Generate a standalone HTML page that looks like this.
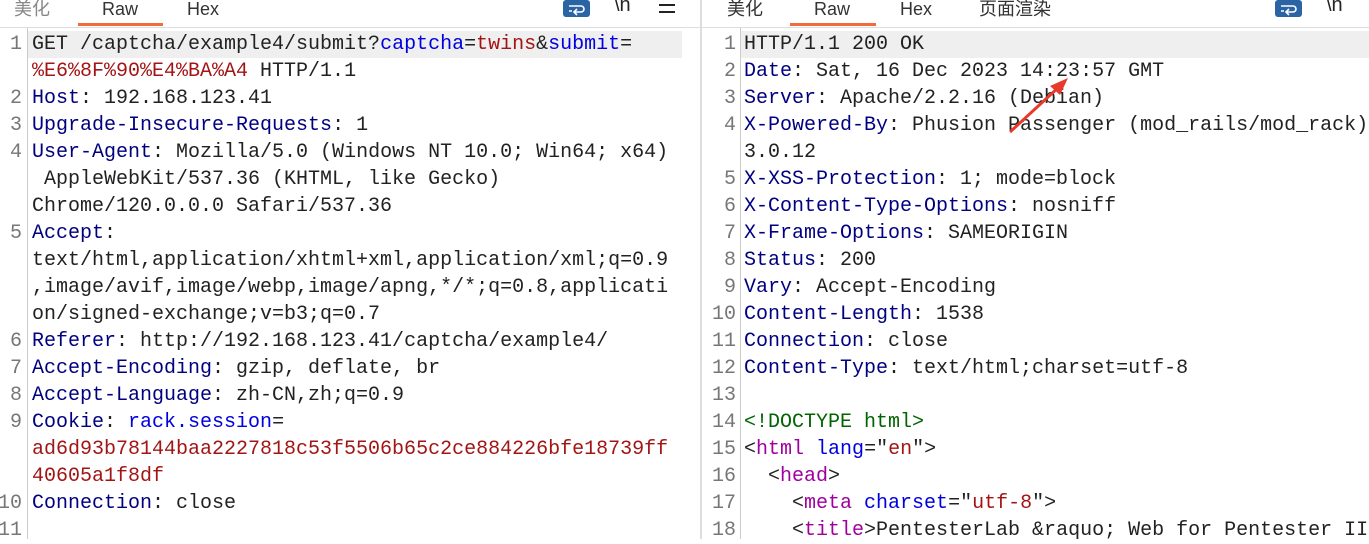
<!DOCTYPE html>
<html><head><meta charset="utf-8"><style>
*{margin:0;padding:0;box-sizing:border-box}
body{width:1369px;height:539px;overflow:hidden;background:#fff;position:relative;font-family:"Liberation Mono","Noto Sans CJK SC",monospace}
.tab{position:absolute;top:0;line-height:18px;font-family:"Liberation Sans","Noto Sans CJK SC",sans-serif;font-size:18px;color:#333}
.tab.g{color:#888}
.ul{position:absolute;top:23px;height:3px;background:#f26b3a}
.hr{position:absolute;top:27px;height:1px;background:#ddd}
.gut{position:absolute;top:28px;bottom:0;width:1px;background:#ccc}
.row{position:absolute;height:27px;line-height:27px;font-size:20px;white-space:pre;color:#222}
.ln{position:absolute;height:27px;line-height:27px;font-size:20px;color:#777;text-align:right}
.hl{position:absolute;top:31px;height:27px;background:#efefef}
.k{color:#000080}.b{color:#0000e0}.r{color:#a31515}.p{color:#a000a0}.gr{color:#006400}
.ic{position:absolute;top:0;width:27px;height:17px;background:#2a64a4;border-radius:3px}
.nl{position:absolute;top:-6px;font-family:"Liberation Sans",sans-serif;font-size:20px;color:#222}
</style></head><body>
<div class="tab g" style="left:14px">美化</div>
<div class="tab" style="left:102px">Raw</div>
<div class="tab" style="left:187px">Hex</div>
<div class="ul" style="left:78px;width:85px"></div>
<div class="ic" style="left:563px"><svg width="27" height="17"><path d="M6 6h12a3 3 0 0 1 0 6h-6M14 9l-3 3 3 3M6 11h3" stroke="#fff" stroke-width="1.6" fill="none"/></svg></div>
<div class="nl" style="left:614px">\n</div>
<div style="position:absolute;left:659px;top:4px;width:16px;height:2px;background:#222"></div>
<div style="position:absolute;left:659px;top:11px;width:16px;height:2px;background:#222"></div>
<div class="hr" style="left:0;width:700px"></div>
<div style="position:absolute;left:700px;top:0;width:2px;height:539px;background:#ddd"></div>

<div class="tab" style="left:727px">美化</div>
<div class="tab" style="left:814px">Raw</div>
<div class="tab" style="left:900px">Hex</div>
<div class="tab" style="left:979px">页面渲染</div>
<div class="ul" style="left:790px;width:86px"></div>
<div class="ic" style="left:1275px"><svg width="27" height="17"><path d="M6 6h12a3 3 0 0 1 0 6h-6M14 9l-3 3 3 3M6 11h3" stroke="#fff" stroke-width="1.6" fill="none"/></svg></div>
<div class="nl" style="left:1326px">\n</div>
<div class="hr" style="left:702px;width:667px"></div>

<div class="gut" style="left:27px"></div>
<div class="gut" style="left:740px"></div>
<div class="hl" style="left:28px;width:654px"></div>
<div class="hl" style="left:741px;width:628px"></div>

<div class="ln" style="left:0;width:22px;top:31px">1</div>
<div class="ln" style="left:0;width:22px;top:85px">2</div>
<div class="ln" style="left:0;width:22px;top:112px">3</div>
<div class="ln" style="left:0;width:22px;top:139px">4</div>
<div class="ln" style="left:0;width:22px;top:220px">5</div>
<div class="ln" style="left:0;width:22px;top:328px">6</div>
<div class="ln" style="left:0;width:22px;top:355px">7</div>
<div class="ln" style="left:0;width:22px;top:382px">8</div>
<div class="ln" style="left:0;width:22px;top:409px">9</div>
<div class="ln" style="left:-8px;width:30px;top:490px">10</div>
<div class="ln" style="left:-8px;width:30px;top:517px">11</div>

<div class="row" style="left:32px;top:31px">GET /captcha/example4/submit?<span class="b">captcha</span>=<span class="r">twins</span>&amp;<span class="b">submit</span>=</div>
<div class="row" style="left:32px;top:58px"><span class="r">%E6%8F%90%E4%BA%A4</span> HTTP/1.1</div>
<div class="row" style="left:32px;top:85px"><span class="k">Host</span>: 192.168.123.41</div>
<div class="row" style="left:32px;top:112px"><span class="k">Upgrade-Insecure-Requests</span>: 1</div>
<div class="row" style="left:32px;top:139px"><span class="k">User-Agent</span>: Mozilla/5.0 (Windows NT 10.0; Win64; x64)</div>
<div class="row" style="left:32px;top:166px"> AppleWebKit/537.36 (KHTML, like Gecko)</div>
<div class="row" style="left:32px;top:193px">Chrome/120.0.0.0 Safari/537.36</div>
<div class="row" style="left:32px;top:220px"><span class="k">Accept</span>:</div>
<div class="row" style="left:32px;top:247px">text/html,application/xhtml+xml,application/xml;q=0.9</div>
<div class="row" style="left:32px;top:274px">,image/avif,image/webp,image/apng,*/*;q=0.8,applicati</div>
<div class="row" style="left:32px;top:301px">on/signed-exchange;v=b3;q=0.7</div>
<div class="row" style="left:32px;top:328px"><span class="k">Referer</span>: http://192.168.123.41/captcha/example4/</div>
<div class="row" style="left:32px;top:355px"><span class="k">Accept-Encoding</span>: gzip, deflate, br</div>
<div class="row" style="left:32px;top:382px"><span class="k">Accept-Language</span>: zh-CN,zh;q=0.9</div>
<div class="row" style="left:32px;top:409px"><span class="k">Cookie</span>: <span class="b">rack.session</span>=</div>
<div class="row" style="left:32px;top:436px"><span class="r">ad6d93b78144baa2227818c53f5506b65c2ce884226bfe18739ff</span></div>
<div class="row" style="left:32px;top:463px"><span class="r">40605a1f8df</span></div>
<div class="row" style="left:32px;top:490px"><span class="k">Connection</span>: close</div>

<div class="ln" style="left:700px;width:36px;top:31px">1</div>
<div class="ln" style="left:700px;width:36px;top:58px">2</div>
<div class="ln" style="left:700px;width:36px;top:85px">3</div>
<div class="ln" style="left:700px;width:36px;top:112px">4</div>
<div class="ln" style="left:700px;width:36px;top:166px">5</div>
<div class="ln" style="left:700px;width:36px;top:193px">6</div>
<div class="ln" style="left:700px;width:36px;top:220px">7</div>
<div class="ln" style="left:700px;width:36px;top:247px">8</div>
<div class="ln" style="left:700px;width:36px;top:274px">9</div>
<div class="ln" style="left:700px;width:36px;top:301px">10</div>
<div class="ln" style="left:700px;width:36px;top:328px">11</div>
<div class="ln" style="left:700px;width:36px;top:355px">12</div>
<div class="ln" style="left:700px;width:36px;top:382px">13</div>
<div class="ln" style="left:700px;width:36px;top:409px">14</div>
<div class="ln" style="left:700px;width:36px;top:436px">15</div>
<div class="ln" style="left:700px;width:36px;top:463px">16</div>
<div class="ln" style="left:700px;width:36px;top:490px">17</div>
<div class="ln" style="left:700px;width:36px;top:517px">18</div>

<div class="row" style="left:744px;top:31px">HTTP/1.1 200 OK</div>
<div class="row" style="left:744px;top:58px"><span class="k">Date</span>: Sat, 16 Dec 2023 14:23:57 GMT</div>
<div class="row" style="left:744px;top:85px"><span class="k">Server</span>: Apache/2.2.16 (Debian)</div>
<div class="row" style="left:744px;top:112px"><span class="k">X-Powered-By</span>: Phusion Passenger (mod_rails/mod_rack)</div>
<div class="row" style="left:744px;top:139px">3.0.12</div>
<div class="row" style="left:744px;top:166px"><span class="k">X-XSS-Protection</span>: 1; mode=block</div>
<div class="row" style="left:744px;top:193px"><span class="k">X-Content-Type-Options</span>: nosniff</div>
<div class="row" style="left:744px;top:220px"><span class="k">X-Frame-Options</span>: SAMEORIGIN</div>
<div class="row" style="left:744px;top:247px"><span class="k">Status</span>: 200</div>
<div class="row" style="left:744px;top:274px"><span class="k">Vary</span>: Accept-Encoding</div>
<div class="row" style="left:744px;top:301px"><span class="k">Content-Length</span>: 1538</div>
<div class="row" style="left:744px;top:328px"><span class="k">Connection</span>: close</div>
<div class="row" style="left:744px;top:355px"><span class="k">Content-Type</span>: text/html;charset=utf-8</div>
<div class="row" style="left:744px;top:409px"><span class="gr">&lt;!DOCTYPE html&gt;</span></div>
<div class="row" style="left:744px;top:436px">&lt;<span class="p">html</span> <span class="b">lang</span>="<span class="r">en</span>"&gt;</div>
<div class="row" style="left:744px;top:463px">  &lt;<span class="p">head</span>&gt;</div>
<div class="row" style="left:744px;top:490px">    &lt;<span class="p">meta</span> <span class="b">charset</span>="<span class="r">utf-8</span>"&gt;</div>
<div class="row" style="left:744px;top:517px">    &lt;<span class="p">title</span>&gt;PentesterLab &amp;raquo; Web for Pentester II</div>

<svg style="position:absolute;left:0;top:0" width="1369" height="539">
<line x1="1010" y1="132" x2="1060" y2="86" stroke="#e8392b" stroke-width="3"/>
<polygon points="1068,78 1050,86 1060,95" fill="#e8392b"/>
</svg>
</body></html>
